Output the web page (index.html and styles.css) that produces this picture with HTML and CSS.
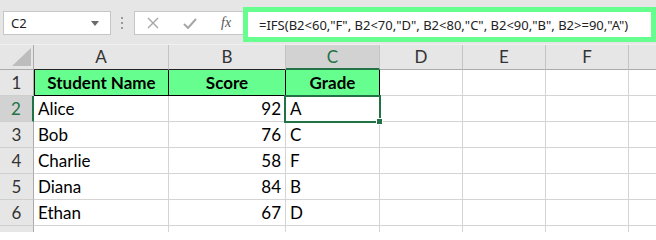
FILE: index.html
```html
<!DOCTYPE html>
<html>
<head>
<meta charset="utf-8">
<link rel="stylesheet" href="styles.css">
</head>
<body>
<div class="toolbar">
  <div class="namebox">
    <span class="name">C2</span>
    <svg class="dd" width="8" height="5" viewBox="0 0 8 5"><path d="M0 0H8L4 5Z" fill="#6a6a6a"/></svg>
  </div>
  <div class="sep">
    <svg width="3" height="12" viewBox="0 0 3 12"><rect x="0" y="0" width="2" height="2" fill="#9a9a9a"/><rect x="0" y="5" width="2" height="2" fill="#9a9a9a"/><rect x="0" y="10" width="2" height="2" fill="#9a9a9a"/></svg>
  </div>
  <div class="fbtns">
    <svg class="ico" width="12" height="12" viewBox="0 0 12 12"><path d="M1 1L11 11M11 1L1 11" stroke="#a6a6a6" stroke-width="1.4" fill="none"/></svg>
    <svg class="ico" width="14" height="11" viewBox="0 0 14 11"><path d="M1 6L5 10L13 1" stroke="#a6a6a6" stroke-width="2" fill="none"/></svg>
    <span class="fx">fx</span>
  </div>
  <div class="formula">=IFS(B2&lt;60,"F", B2&lt;70,"D", B2&lt;80,"C", B2&lt;90,"B", B2&gt;=90,"A")</div>
</div>
<div class="sheet">
  <div class="grid">
    <div class="corner"><svg width="19" height="18" viewBox="0 0 19 18"><path d="M19 0V18H0Z" fill="#bdbdbd"/></svg></div>
    <div class="ch ink">A</div>
    <div class="ch ink">B</div>
    <div class="ch sel">C</div>
    <div class="ch">D</div>
    <div class="ch">E</div>
    <div class="ch">F</div>
    <div class="ch last"></div>

    <div class="rh">1</div>
    <div class="c hd first">Student Name</div>
    <div class="c hd">Score</div>
    <div class="c hd">Grade</div>
    <div class="c"></div><div class="c"></div><div class="c"></div><div class="c last"></div>

    <div class="rh sel">2</div>
    <div class="c">Alice</div>
    <div class="c num">92</div>
    <div class="c">A</div>
    <div class="c"></div><div class="c"></div><div class="c"></div><div class="c last"></div>

    <div class="rh">3</div>
    <div class="c">Bob</div>
    <div class="c num">76</div>
    <div class="c">C</div>
    <div class="c"></div><div class="c"></div><div class="c"></div><div class="c last"></div>

    <div class="rh">4</div>
    <div class="c">Charlie</div>
    <div class="c num">58</div>
    <div class="c">F</div>
    <div class="c"></div><div class="c"></div><div class="c"></div><div class="c last"></div>

    <div class="rh">5</div>
    <div class="c">Diana</div>
    <div class="c num">84</div>
    <div class="c">B</div>
    <div class="c"></div><div class="c"></div><div class="c"></div><div class="c last"></div>

    <div class="rh">6</div>
    <div class="c">Ethan</div>
    <div class="c num">67</div>
    <div class="c">D</div>
    <div class="c"></div><div class="c"></div><div class="c"></div><div class="c last"></div>

    <div class="rh"></div>
    <div class="c"></div><div class="c"></div><div class="c"></div>
    <div class="c"></div><div class="c"></div><div class="c"></div><div class="c last"></div>
  </div>
  <div class="selection"><span class="handle"></span></div>
</div>
</body>
</html>
```
FILE: styles.css
```css
html, body {
  margin: 0;
  padding: 0;
  width: 656px;
  height: 232px;
  overflow: hidden;
  background: #fff;
}
body {
  font-family: Lato, "Noto Sans", sans-serif;
}
.toolbar {
  height: 45px;
  display: flex;
  align-items: flex-start;
  box-sizing: border-box;
  background: #e6e6e6;
  border-bottom: 1px solid #f0f0f0;
}
.namebox {
  margin: 11px 0 0 3px;
  width: 108px;
  height: 24px;
  box-sizing: border-box;
  background: #fff;
  border: 1px solid #c6c6c6;
  display: flex;
  align-items: center;
  justify-content: space-between;
  padding: 0 11px 0 7px;
}
.name {
  font-family: "Noto Sans", sans-serif;
  font-size: 13px;
  color: #222;
}
.sep {
  width: 23px;
  height: 24px;
  margin-top: 11px;
  display: flex;
  align-items: center;
  justify-content: center;
}
.fbtns {
  margin-top: 11px;
  width: 109px;
  height: 24px;
  box-sizing: border-box;
  background: #fff;
  border: 1px solid #c6c6c6;
  border-right: none;
  display: flex;
  align-items: center;
  padding-left: 12px;
  gap: 24px;
}
.fx {
  font-family: "Liberation Serif", serif;
  font-style: italic;
  font-size: 14px;
  color: #555;
}
.formula {
  margin-top: 7px;
  flex: 1;
  height: 35px;
  box-sizing: border-box;
  border: 5px solid #66ff8f;
  background: #fff;
  font-family: "Noto Sans", sans-serif;
  font-size: 13px;
  color: #222;
  display: flex;
  align-items: center;
  padding-left: 11px;
  white-space: nowrap;
}
.sheet {
  position: relative;
}
.grid {
  display: grid;
  grid-template-columns: 34px 135px 117px 94px 83px 83px 83px 1fr;
  grid-template-rows: 25px repeat(7, 26px);
  background: #fff;
}
.grid > div {
  box-sizing: border-box;
}
.corner {
  background: #e6e6e6;
  border-right: 1px solid #ababab;
  border-bottom: 1px solid #ababab;
  display: flex;
  align-items: flex-end;
  justify-content: flex-end;
  padding: 0 2px 3px 0;
}
.ch {
  background: #e6e6e6;
  border-right: 1px solid #c4c4c4;
  border-bottom: 1px solid #ababab;
  text-align: center;
  font-size: 17px;
  line-height: 24px;
  color: #333;
}
.ch.ink {
  border-bottom-color: #222;
}
.ch.sel {
  background: #d2d2d2;
  color: #217346;
  border-bottom: 2px solid #217346;
}
.ch.last, .c.last {
  border-right: none;
}
.rh {
  background: #e6e6e6;
  border-right: 1px solid #ababab;
  border-bottom: 1px solid #cfcfcf;
  text-align: center;
  font-size: 17px;
  line-height: 25px;
  color: #333;
}
.rh.sel {
  background: #d2d2d2;
  color: #217346;
  border-right: 2px solid #217346;
}
.c {
  border-right: 1px solid #d4d4d4;
  border-bottom: 1px solid #d4d4d4;
  font-size: 17px;
  line-height: 25px;
  padding: 0 4px;
  color: #000;
  white-space: nowrap;
}
.c.num {
  text-align: right;
}
.c.hd {
  background: #66ff8f;
  font-weight: bold;
  text-align: center;
  border-right: 1px solid #000;
  border-bottom: 1px solid #000;
}
.c.hd.first {
  border-left: 1px solid #000;
}
.selection {
  position: absolute;
  left: 284px;
  top: 50px;
  width: 97px;
  height: 28px;
  box-sizing: border-box;
  border: 2px solid #217346;
}
.handle {
  position: absolute;
  right: -4px;
  bottom: -4px;
  width: 5px;
  height: 5px;
  background: #217346;
  border: 1px solid #fff;
}
```
